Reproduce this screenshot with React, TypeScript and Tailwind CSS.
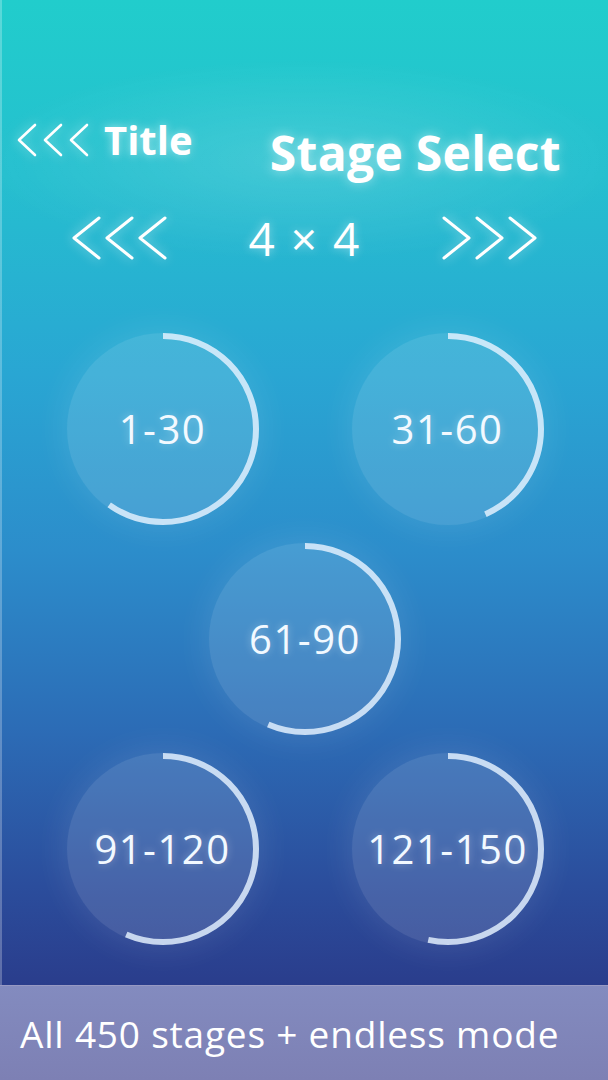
import React from 'react';

const ringStroke = 'rgba(228,242,255,0.82)';

function Chevrons({ dir, w, h, step, cw, sw }: { dir: 'left' | 'right'; w: number; h: number; step: number; cw: number; sw: number }) {
  const items = [0, 1, 2];
  return (
    <svg width={w} height={h} viewBox={`0 0 ${w} ${h}`} fill="none" stroke="white" strokeWidth={sw} strokeLinecap="round" strokeLinejoin="round" className="drop-shadow-[0_0_6px_rgba(255,255,255,0.55)]">
      {items.map((i) => {
        const x0 = 2 + i * step;
        const pts =
          dir === 'left'
            ? `${x0 + cw},2 ${x0},${h / 2} ${x0 + cw},${h - 2}`
            : `${x0},2 ${x0 + cw},${h / 2} ${x0},${h - 2}`;
        return <polyline key={i} points={pts} />;
      })}
    </svg>
  );
}

function Ring({ label, deg }: { label: string; deg: number }) {
  const r = 93;
  const c = 2 * Math.PI * r;
  const len = (c * deg) / 360;
  return (
    <div className="relative w-[192px] h-[192px] shrink-0 rounded-full bg-white/[0.13] shadow-[0_0_36px_rgba(255,255,255,0.12)] flex items-center justify-center">
      <svg className="absolute inset-0" width={192} height={192} viewBox="0 0 192 192">
        <circle
          cx={96}
          cy={96}
          r={r}
          fill="none"
          stroke={ringStroke}
          strokeWidth={6}
          strokeDasharray={`${len} ${c}`}
          transform="rotate(-90 96 96)"
        />
      </svg>
      <span className="relative text-[40px] leading-none tracking-[1.5px] text-[#f2f9ff] [text-shadow:0_0_8px_rgba(255,255,255,0.35)]">
        {label}
      </span>
    </div>
  );
}

export default function App() {
  return (
    <div className="w-[608px] h-[1080px] flex flex-col overflow-hidden font-['Open_Sans','Noto_Sans',sans-serif] text-white">
      {/* Main area */}
      <div className="flex-1 flex flex-col border-l-2 border-white/25 bg-[radial-gradient(ellipse_320px_100px_at_300px_160px,rgba(255,255,255,0.14),rgba(255,255,255,0)),linear-gradient(180deg,#21cdcc_0%,#25bfcf_18%,#29a6d3_38%,#2c8dcb_56%,#2c6cb6_74%,#2b4d9c_90%,#2a3d8c_100%)]">
        {/* Header */}
        <div className="flex items-start justify-between pt-[120px] pl-[15px] pr-[47px] h-[184px]">
          <div className="flex items-center gap-[15px]">
            <Chevrons dir="left" w={72} h={34} step={26} cw={16} sw={2.6} />
            <span className="text-[40px] font-bold leading-none [text-shadow:0_0_10px_rgba(255,255,255,0.55)]">Title</span>
          </div>
          <span className="mt-[9px] text-[48px] font-bold leading-none tracking-[0.3px] [text-shadow:0_0_12px_rgba(255,255,255,0.55)]">
            Stage Select
          </span>
        </div>

        {/* Size selector */}
        <div className="flex items-center justify-between pl-[70px] pr-[70px] h-[48px] mt-[30px]">
          <Chevrons dir="left" w={96} h={44} step={33} cw={25} sw={3} />
          <span className="text-[46px] leading-none tracking-[2px] [text-shadow:0_0_10px_rgba(255,255,255,0.45)]">4 × 4</span>
          <Chevrons dir="right" w={96} h={44} step={33} cw={25} sw={3} />
        </div>

        {/* Stage rings */}
        <div className="flex flex-col items-center gap-[18px] mt-[71px]">
          <div className="flex justify-center gap-[93px]">
            <Ring label="1-30" deg={215} />
            <Ring label="31-60" deg={156} />
          </div>
          <div className="flex justify-center">
            <Ring label="61-90" deg={203} />
          </div>
          <div className="flex justify-center gap-[93px]">
            <Ring label="91-120" deg={203} />
            <Ring label="121-150" deg={192} />
          </div>
        </div>
      </div>

      {/* Bottom banner */}
      <div className="h-[95px] shrink-0 flex items-center pl-[20px] bg-[linear-gradient(180deg,#838bbf_0%,#7d80b4_100%)] border-t border-white/20">
        <span className="text-[37px] leading-none tracking-[0.8px] text-white">All 450 stages + endless mode</span>
      </div>
    </div>
  );
}
